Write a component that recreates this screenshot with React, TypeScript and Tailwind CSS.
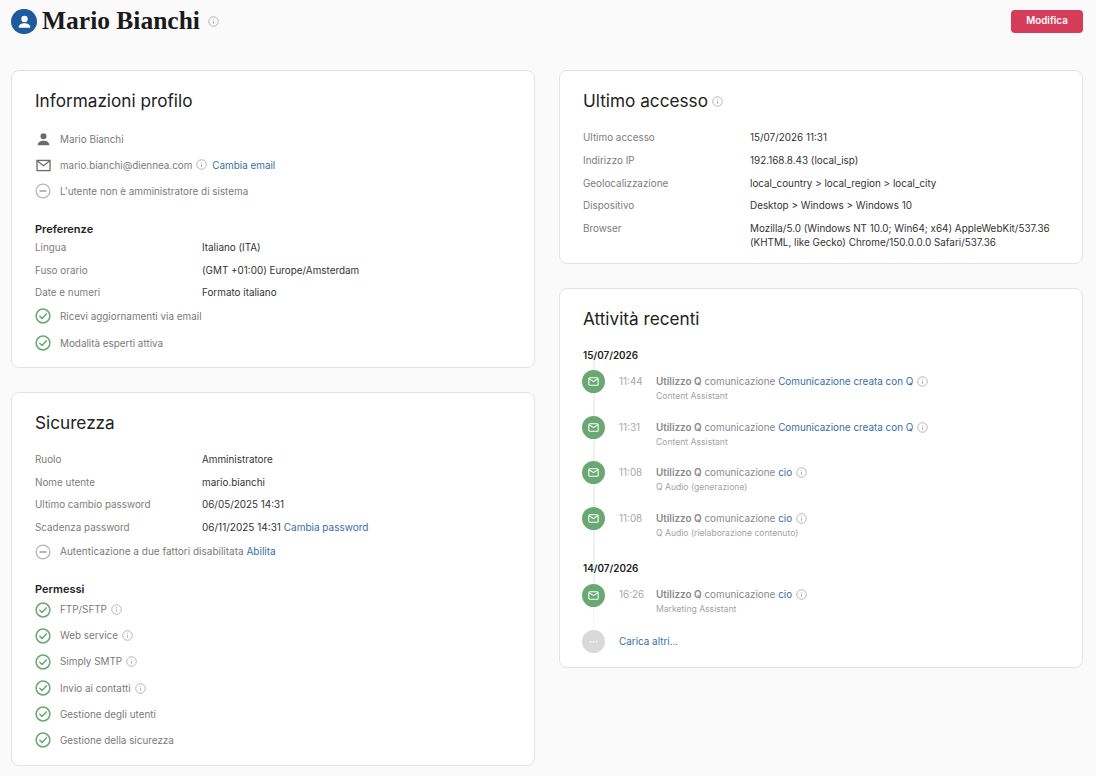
import type { ReactNode } from "react";

const sans = { fontFamily: "Inter, sans-serif" };

function InfoIcon({ className = "" }: { className?: string }) {
  return (
    <svg viewBox="0 0 12 12" className={`h-[11px] w-[11px] shrink-0 ${className}`} fill="none" stroke="#a8a8a8" strokeWidth="0.9">
      <circle cx="6" cy="6" r="5.2" />
      <path d="M6 5.4v3.2M6 3.2v1" />
    </svg>
  );
}

function CheckIcon() {
  return (
    <svg viewBox="0 0 16 16" className="h-[16px] w-[16px] shrink-0" fill="none" stroke="#6aa873" strokeWidth="1.5">
      <circle cx="8" cy="8" r="6.9" />
      <path d="M4.8 8.2l2.3 2.3 4.2-4.6" strokeLinecap="round" strokeLinejoin="round" />
    </svg>
  );
}

function MinusIcon() {
  return (
    <svg viewBox="0 0 16 16" className="h-[16px] w-[16px] shrink-0" fill="none" stroke="#b5b5b5" strokeWidth="1.3">
      <circle cx="8" cy="8" r="6.9" />
      <path d="M4.6 8h6.8" stroke="#8f8f8f" />
    </svg>
  );
}

function IconRow({ icon, children, className = "" }: { icon: ReactNode; children: ReactNode; className?: string }) {
  return (
    <div className={`flex h-[16px] items-center gap-[9px] text-[9.9px] text-[#7a7a7a] ${className}`}>
      <span className="flex w-[16px] justify-center">{icon}</span>
      <div className="flex items-center gap-[4px] whitespace-nowrap">{children}</div>
    </div>
  );
}

function KeyRow({ label, width, children }: { label: string; width: string; children: ReactNode }) {
  return (
    <div className="flex text-[9.9px] leading-[15px]">
      <div className={`${width} shrink-0 text-[#7c7c7c]`}>{label}</div>
      <div className="leading-[14px] text-[#333333]">{children}</div>
    </div>
  );
}

function Card({ title, info, className = "", children }: { title: string; info?: boolean; className?: string; children: ReactNode }) {
  return (
    <section className={`rounded-[8px] border border-[#e2e2e2] bg-white px-[23px] pt-[18px] ${className}`}>
      <h2 className="flex h-[24px] items-center gap-[4px] text-[17.2px] font-normal text-[#222222]">
        {title}
        {info && <InfoIcon />}
      </h2>
      {children}
    </section>
  );
}

function Activity({ time, link, sub, last }: { time: string; link: string; sub: string; last?: boolean }) {
  return (
    <div className={`relative flex ${last ? "h-[46px]" : "h-[45.5px]"}`}>
      <div className="-ml-[1px] flex h-[23px] w-[23px] shrink-0 items-center justify-center rounded-full bg-[#6aa873]">
        <svg viewBox="0 0 12 10" className="h-[9px] w-[11px]" fill="none" stroke="#ffffff" strokeWidth="1.2">
          <rect x="0.8" y="0.8" width="10.4" height="8.4" rx="1.2" />
          <path d="M1.2 2l4.8 3.2L10.8 2" />
        </svg>
      </div>
      <div className={`ml-[14px] w-[37px] text-[9.9px] leading-[15px] text-[#a8a8a8] ${last ? "pt-[3px]" : "pt-[4px]"}`}>{time}</div>
      <div className={last ? "pt-[3px]" : "pt-[4px]"}>
        <div className="flex items-center gap-[4px] text-[9.9px] leading-[15px] text-[#8a8a8a]">
          <span className="whitespace-nowrap">
            <b className="font-semibold">Utilizzo Q</b> comunicazione <span className="text-[#3a6ea5]">{link}</span>
          </span>
          <InfoIcon />
        </div>
        <div className="mt-[1px] text-[8.6px] leading-[13px] text-[#a3a3a3]">{sub}</div>
      </div>
    </div>
  );
}

export default function App() {
  return (
    <div className="min-h-[776px] bg-[#fafafa] pl-[11px] pr-[13px]" style={sans}>
      <header className="flex h-[70px] items-start justify-between">
        <div className="flex h-[43px] items-center">
          <div className="flex h-[25px] w-[26px] items-center justify-center rounded-full bg-[#1f5a9e]">
            <svg viewBox="0 0 16 16" className="h-[17px] w-[17px]" fill="#ffffff">
              <circle cx="8" cy="5.6" r="3" />
              <path d="M2.6 13.2c0-2.3 2.6-3.6 5.4-3.6s5.4 1.3 5.4 3.6v.6H2.6z" />
            </svg>
          </div>
          <h1 className="ml-[5px] text-[25.5px] font-bold text-[#1a1a1a]" style={{ fontFamily: '"Liberation Serif", serif' }}>
            Mario Bianchi
          </h1>
          <InfoIcon className="ml-[8px]" />
        </div>
        <button className="mt-[10px] h-[23px] w-[72px] rounded-[4px] bg-[#d53c59] text-[9.8px] font-semibold text-white">Modifica</button>
      </header>

      <main className="grid grid-cols-2 items-start gap-x-[24px]">
        <div className="flex flex-col gap-[24px]">
          <Card title="Informazioni profilo" className="h-[298px]">
            <div className="mt-[18px] flex flex-col gap-[10px]">
              <IconRow
                icon={
                  <svg viewBox="0 0 16 16" className="h-[15px] w-[15px]" fill="#6b6b6b">
                    <circle cx="8" cy="4.6" r="3.2" />
                    <path d="M1.8 14c0-3 3-4.6 6.2-4.6s6.2 1.6 6.2 4.6z" />
                  </svg>
                }
              >
                Mario Bianchi
              </IconRow>
              <IconRow
                icon={
                  <svg viewBox="0 0 16 14" className="h-[13px] w-[15px]" fill="none" stroke="#6b6b6b" strokeWidth="1.4">
                    <rect x="1" y="1.5" width="14" height="11" />
                    <path d="M1.2 2l6.8 5.2L14.8 2" />
                  </svg>
                }
              >
                <span className="text-[9.85px]">mario.bianchi@diennea.com</span>
                <InfoIcon className="mb-[1px]" />
                <span className="ml-[1px] text-[#3a6ea5]">Cambia email</span>
              </IconRow>
              <IconRow icon={<MinusIcon />}>L'utente non è amministratore di sistema</IconRow>
            </div>
            <h3 className="mt-[23px] text-[11px] font-semibold leading-[14px] text-[#222222]">Preferenze</h3>
            <div className="mt-[4px] flex flex-col gap-[7.7px]">
              <KeyRow label="Lingua" width="w-[167px]">Italiano (ITA)</KeyRow>
              <KeyRow label="Fuso orario" width="w-[167px]">(GMT +01:00) Europe/Amsterdam</KeyRow>
              <KeyRow label="Date e numeri" width="w-[167px]">Formato italiano</KeyRow>
            </div>
            <div className="mt-[8px] flex flex-col gap-[11px]">
              <IconRow icon={<CheckIcon />}>Ricevi aggiornamenti via email</IconRow>
              <IconRow icon={<CheckIcon />}>Modalità esperti attiva</IconRow>
            </div>
          </Card>

          <Card title="Sicurezza" className="h-[374px]">
            <div className="mt-[17px] flex flex-col gap-[7.5px]">
              <KeyRow label="Ruolo" width="w-[167px]">Amministratore</KeyRow>
              <KeyRow label="Nome utente" width="w-[167px]">mario.bianchi</KeyRow>
              <KeyRow label="Ultimo cambio password" width="w-[167px]">06/05/2025 14:31</KeyRow>
              <KeyRow label="Scadenza password" width="w-[167px]">
                <span className="text-[10px]">
                  06/11/2025 14:31 <span className="text-[#3a6ea5]">Cambia password</span>
                </span>
              </KeyRow>
            </div>
            <IconRow icon={<MinusIcon />} className="mt-[9px]">
              <span className="text-[10px]">
                Autenticazione a due fattori disabilitata <span className="text-[#3a6ea5]">Abilita</span>
              </span>
            </IconRow>
            <h3 className="mt-[22px] text-[11px] font-semibold leading-[14px] text-[#222222]">Permessi</h3>
            <div className="mt-[6px] flex flex-col gap-[10.2px]">
              <IconRow icon={<CheckIcon />}>FTP/SFTP<InfoIcon /></IconRow>
              <IconRow icon={<CheckIcon />}>Web service<InfoIcon /></IconRow>
              <IconRow icon={<CheckIcon />}>Simply SMTP<InfoIcon /></IconRow>
              <IconRow icon={<CheckIcon />}>Invio ai contatti<InfoIcon /></IconRow>
              <IconRow icon={<CheckIcon />}>Gestione degli utenti</IconRow>
              <IconRow icon={<CheckIcon />}>Gestione della sicurezza</IconRow>
            </div>
          </Card>
        </div>

        <div className="flex flex-col gap-[24px]">
          <Card title="Ultimo accesso" info className="h-[194px]">
            <div className="mt-[17px] flex flex-col gap-[7.8px]">
              <KeyRow label="Ultimo accesso" width="w-[167px]">15/07/2026 11:31</KeyRow>
              <KeyRow label="Indirizzo IP" width="w-[167px]">192.168.8.43 (local_isp)</KeyRow>
              <KeyRow label="Geolocalizzazione" width="w-[167px]">local_country &gt; local_region &gt; local_city</KeyRow>
              <KeyRow label="Dispositivo" width="w-[167px]">Desktop &gt; Windows &gt; Windows 10</KeyRow>
              <KeyRow label="Browser" width="w-[167px]">
                Mozilla/5.0 (Windows NT 10.0; Win64; x64) AppleWebKit/537.36
                <br />
                (KHTML, like Gecko) Chrome/150.0.0.0 Safari/537.36
              </KeyRow>
            </div>
          </Card>

          <Card title="Attività recenti" className="h-[380px]">
            <div className="relative mt-[16px]">
              <div className="absolute left-[10px] top-0 h-[244px] w-[1.5px] bg-[#f0f0f0]" />
              <div className="absolute left-[10px] top-[244px] h-[30px] border-l-[1.5px] border-dotted border-[#e8e8e8]" />
              <div className="relative">
                <div className="h-[16px] text-[9.9px] font-semibold leading-[16px] text-[#222222]">15/07/2026</div>
                <div className="mt-[7px]">
                  <Activity time="11:44" link="Comunicazione creata con Q" sub="Content Assistant" />
                  <Activity time="11:31" link="Comunicazione creata con Q" sub="Content Assistant" />
                  <Activity time="11:08" link="cio" sub="Q Audio (generazione)" />
                  <Activity time="11:08" link="cio" sub="Q Audio (rielaborazione contenuto)" />
                </div>
                <div className="mt-[8px] h-[16px] text-[9.9px] font-semibold leading-[16px] text-[#222222]">14/07/2026</div>
                <div className="mt-[8px]">
                  <Activity time="16:26" link="cio" sub="Marketing Assistant" last />
                </div>
                <div className="flex items-center">
                  <div className="-ml-[1px] flex h-[23px] w-[23px] items-center justify-center rounded-full bg-[#d9d9d9] text-[9px] font-bold leading-none text-white">···</div>
                  <span className="ml-[14px] text-[9.9px] text-[#3a6ea5]">Carica altri...</span>
                </div>
              </div>
            </div>
          </Card>
        </div>
      </main>
    </div>
  );
}
